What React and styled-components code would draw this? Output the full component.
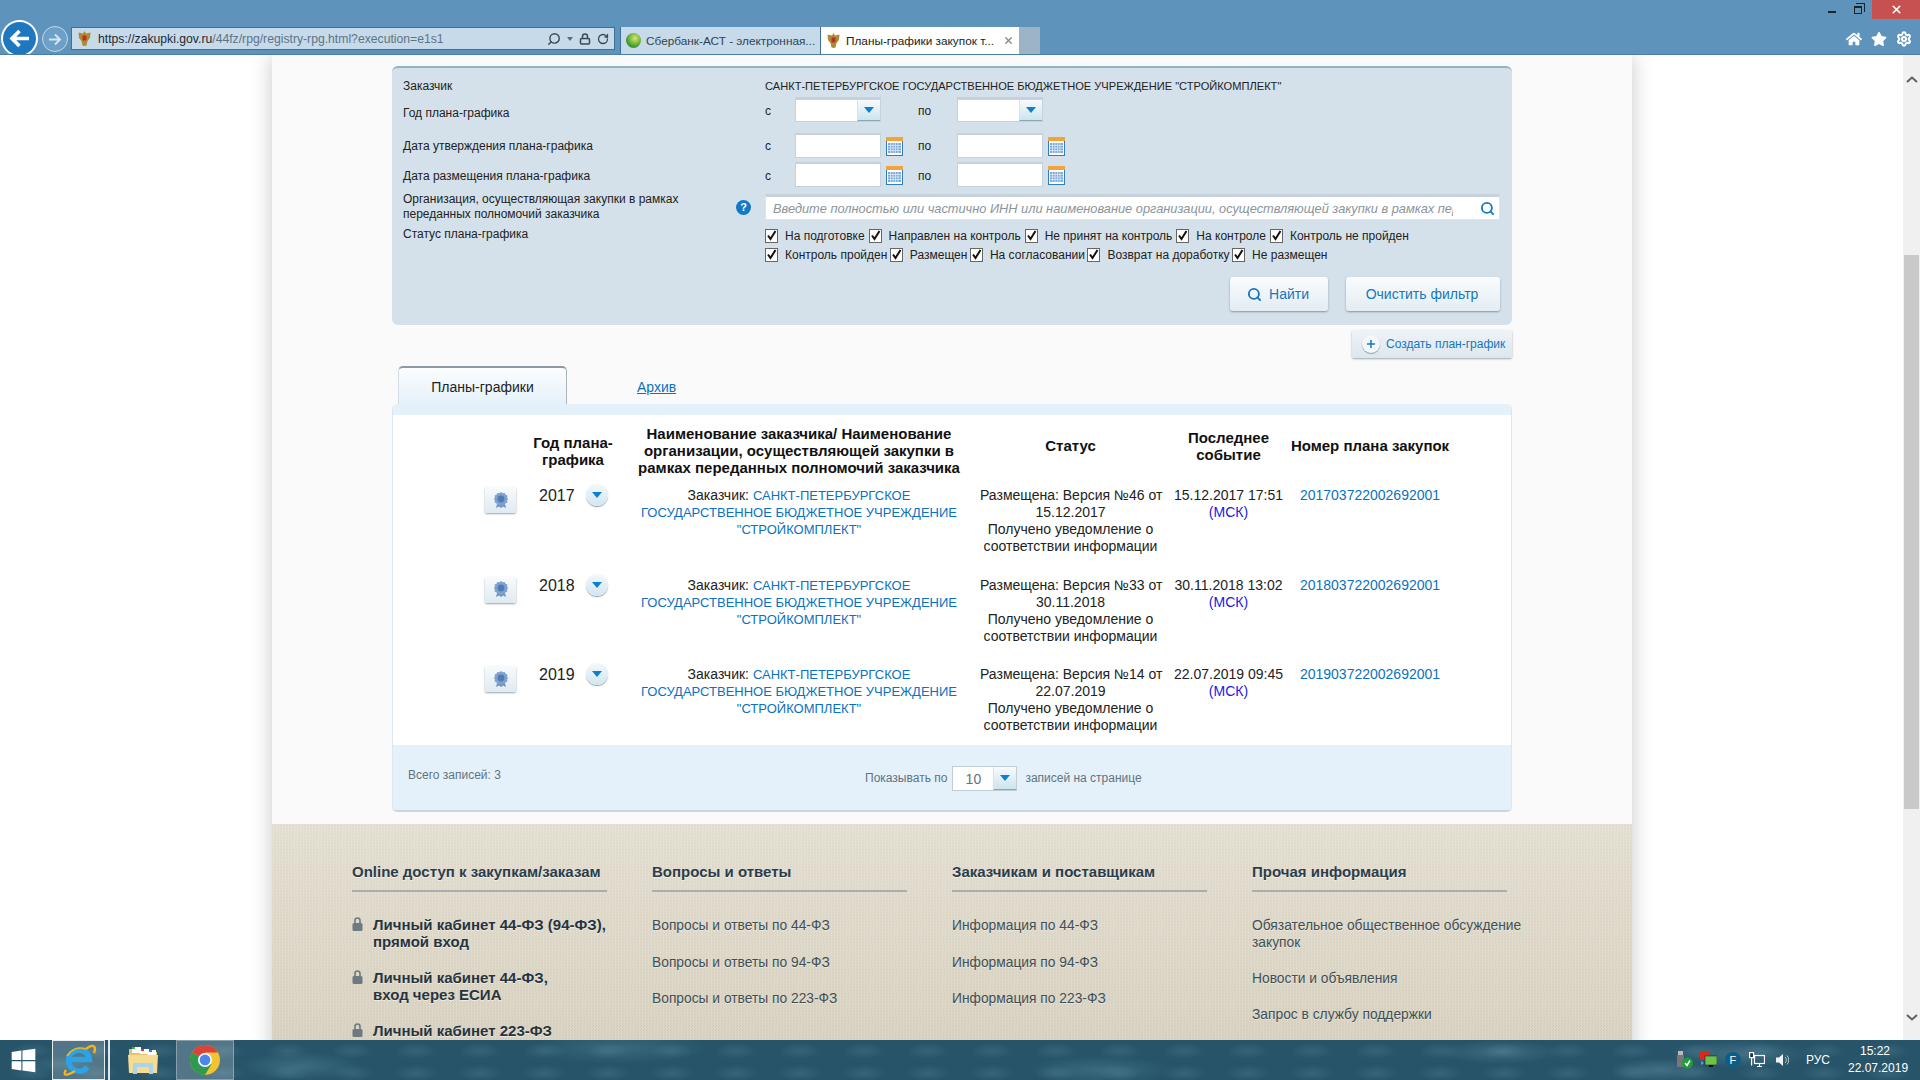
import React from 'react';
import styled, { createGlobalStyle } from 'styled-components';
import { FaHome, FaStar, FaWindows } from 'react-icons/fa';
import { Settings, Search, Plus, RotateCw, Lock as LockGlyph, X } from 'lucide-react';

const GlobalStyle = createGlobalStyle`
  html, body { margin: 0; padding: 0; background: #fff; }
  body { font-family: "Liberation Sans", Arial, sans-serif; color: #222; }
  * { box-sizing: border-box; }
`;

const statusTop = ['На подготовке', 'Направлен на контроль', 'Не принят на контроль', 'На контроле', 'Контроль не пройден'];
const statusBottom = ['Контроль пройден', 'Размещен', 'На согласовании', 'Возврат на доработку', 'Не размещен'];

const plans = [
  { year: 2017, version: '46', date: '15.12.2017', event: '15.12.2017 17:51', number: '201703722002692001' },
  { year: 2018, version: '33', date: '30.11.2018', event: '30.11.2018 13:02', number: '201803722002692001' },
  { year: 2019, version: '14', date: '22.07.2019', event: '22.07.2019 09:45', number: '201903722002692001' },
];

const Emblem = () => (
  <svg width="15" height="17" viewBox="0 0 15 17">
    <path d="M7.5 1 9 3.5 13.5 2.5 13 8 10.5 11 9.5 15.5 7.5 16 5.5 15.5 4.500 11 2 8 1.500 2.500 6 3.500Z" fill="#b08a2e" />
    <rect x="5.500" y="5.500" width="4" height="5" rx="1" fill="#b5322a" />
  </svg>
);

const CalendarIcon = () => (
  <svg width="17" height="19" viewBox="0 0 17 19">
    <rect x="0.500" y="0.500" width="16" height="18" fill="#fff" stroke="#2f7fb8" />
    <rect x="0" y="0" width="17" height="4" fill="#f3a33c" />
    <rect x="2" y="6" width="13" height="10" fill="#7fa9dc" />
    <path d="M4.500 6v10M7 6v10M9.500 6v10M12 6v10M2 8.500h13M2 11h13M2 13.500h13" stroke="#dce8f6" strokeWidth="0.8" />
  </svg>
);

const AwardIcon = () => (
  <svg width="14" height="17" viewBox="0 0 14 17">
    <path d="M3.500 10 2 16l3-1.500L7 16l2-1.500L12 16l-1.500-6Z" fill="#6f95c4" />
    <path d="M7 0l1.700 1.200 2-.3.8 1.900 1.900.8-.3 2L14 7l-.9 1.400.3 2-1.900.8-.8 1.900-2-.3L7 14l-1.700-1.200-2 .3-.8-1.900-1.900-.8.3-2L0 7l.9-1.400-.3-2 1.900-.8.8-1.900 2 .3Z" fill="#7ea1cd" />
    <circle cx="7" cy="7" r="3.400" fill="#4f7cb5" />
  </svg>
);

const PadlockIcon = () => (
  <svg width="11" height="14" viewBox="0 0 11 14">
    <path d="M3 6V3.500a2.500 2.500 0 0 1 5 0V6" fill="none" stroke="#6d7a82" strokeWidth="1.600" />
    <rect x="0.500" y="6" width="10" height="8" rx="1.500" fill="#6d7a82" />
  </svg>
);

const CheckMark = () => (
  <svg width="11" height="11" viewBox="0 0 11 11">
    <path d="M2 5.500 4.500 9 9.500 1" fill="none" stroke="#111" strokeWidth="2" />
  </svg>
);

const IeLogo = () => (
  <svg width="34" height="34" viewBox="0 0 34 34">
    <path d="M25.500 24A10.500 10.500 0 1 1 27.500 16.500H7" fill="none" stroke="#2ba3e4" strokeWidth="5.500" />
    <path d="M4 27C0 33 5 33 13 28M24 6c6-5 11-4 8 4" fill="none" stroke="#f2b51d" strokeWidth="2.400" />
    <path d="M5 13C9 7 16 3 24 6" fill="none" stroke="#f2b51d" strokeWidth="1.600" />
  </svg>
);

const FolderIcon = () => (
  <svg width="32" height="30" viewBox="0 0 32 30">
    <path d="M2 4h10l3 3h15v20H2Z" fill="#e6c467" />
    <rect x="5" y="2" width="9" height="6" fill="#fff" />
    <rect x="5" y="2" width="3" height="2" fill="#3bb54a" />
    <rect x="13" y="4" width="9" height="5" fill="#fff" />
    <rect x="14" y="4" width="3" height="2" fill="#d8402e" />
    <rect x="21" y="5" width="8" height="5" fill="#fff" />
    <rect x="22" y="5" width="3" height="2" fill="#2e86d8" />
    <path d="M1 10h30l-1 18H2Z" fill="#f5dc92" />
    <path d="M6 29V18h20v11h-4v-7H10v7Z" fill="#a8d4ec" />
  </svg>
);

const ChromeLogo = () => (
  <svg width="30" height="30" viewBox="0 0 30 30">
    <circle cx="15" cy="15" r="15" fill="#f4c430" />
    <path d="M15 15 2 7.500A15 15 0 0 1 28 7.500H15Z" fill="#d9443a" />
    <path d="M15 15 2 7.500A15 15 0 0 0 15 30l6.500-11Z" fill="#2d9a4f" />
    <circle cx="15" cy="15" r="7" fill="#fff" />
    <circle cx="15" cy="15" r="5.400" fill="#4b86ea" />
  </svg>
);

const UsbIcon = () => (
  <svg width="16" height="18" viewBox="0 0 16 18">
    <rect x="1" y="0" width="5" height="4" fill="#bbb" />
    <rect x="0" y="4" width="7" height="12" rx="1" fill="#777" />
    <circle cx="10.500" cy="12" r="5.500" fill="#1f9c3a" />
    <path d="M8 12l2 2.500 3-5" fill="none" stroke="#fff" strokeWidth="1.500" />
  </svg>
);

const NetworkIcon = () => (
  <svg width="17" height="16" viewBox="0 0 17 16">
    <rect x="0" y="0" width="10" height="8" fill="#d8291c" />
    <rect x="5" y="4" width="12" height="9" fill="#6cc24a" stroke="#113" strokeWidth="0.500" />
    <rect x="9" y="13" width="4" height="2" fill="#111" />
    <path d="M1 9v4l3-2Z" fill="#4ea1e8" />
  </svg>
);

const MonitorIcon = () => (
  <svg width="16" height="16" viewBox="0 0 16 16" fill="none" stroke="#fff" strokeWidth="1.200">
    <rect x="5.500" y="3.500" width="10" height="8" />
    <path d="M8 14.500h5M10.500 11.500v3" />
    <rect x="0.600" y="0.600" width="4" height="5" fill="#234" />
    <path d="M2.600 5.600v8" />
  </svg>
);

const SpeakerIcon = () => (
  <svg width="13" height="14" viewBox="0 0 13 14">
    <path d="M0 4.500h3L7 1v12L3 9.500H0Z" fill="#eef3f6" />
    <path d="M9 4a4 4 0 0 1 0 6M11 2.500a6.500 6.500 0 0 1 0 9" fill="none" stroke="#b8c8d2" strokeWidth="1" />
  </svg>
);

const ChromeBar = styled.header`
  height: 55px;
  background: #5e94bc;
  border-bottom: 1px solid #4b7ea6;
  overflow: hidden;
  flex: none;
`;

const WindowControls = styled.div`
  height: 19px;
  display: flex;
  justify-content: flex-end;
  gap: 2px;
  color: #1c1c1c;
`;

const WindowButton = styled.div`
  display: flex;
  align-items: center;
  justify-content: center;
  width: ${p => p.$width}px;
  height: 19px;
  background: ${p => p.$danger ? '#c75050' : 'transparent'};
  color: ${p => p.$danger ? '#fff' : '#1c1c1c'};
`;

const MinimizeMark = styled.span`
  display: block;
  width: 8px;
  height: 2px;
  margin-top: 5px;
  background: #222;
`;

const RestoreMark = styled.span`
  display: block;
  position: relative;
  width: 8px;
  height: 8px;
  margin-top: 1px;
  border: 1px solid #222;
  border-top-width: 2px;
  &::before {
    content: '';
    position: absolute;
    top: -5px;
    left: 1px;
    width: 8px;
    height: 8px;
    border-top: 1px solid #222;
    border-right: 1px solid #222;
  }
`;

const NavRow = styled.div`
  display: flex;
  align-items: flex-start;
  height: 35px;
`;

const BackButton = styled.div`
  display: flex;
  align-items: center;
  justify-content: center;
  width: 37px;
  height: 37px;
  margin: 1px 0 0 1px;
  border-radius: 50%;
  background: #fff;
  padding: 2px;
  flex: none;
  & > span {
    display: flex;
    align-items: center;
    justify-content: center;
    width: 33px;
    height: 33px;
    border-radius: 50%;
    background: #1d78bf;
  }
`;

const ForwardButton = styled.div`
  display: flex;
  align-items: center;
  justify-content: center;
  width: 26px;
  height: 26px;
  margin: 7px 0 0 4px;
  border-radius: 50%;
  border: 1px solid #c5d9e8;
  background: #6da0c6;
  flex: none;
`;

const AddressBar = styled.div`
  display: flex;
  align-items: center;
  width: 544px;
  height: 23px;
  margin: 8px 0 0 3px;
  padding: 0 5px;
  background: #c6dae9;
  border: 1px solid #3d7199;
  font-size: 12.2px;
  flex: none;
`;

const AddressUrl = styled.span`
  margin-left: 6px;
  color: #5d7486;
  white-space: nowrap;
  flex: 1;
  & b { font-weight: 400; color: #1b2a35; }
`;

const AddressTools = styled.span`
  display: flex;
  align-items: center;
  gap: 6px;
  color: #3a4a56;
`;

const TinyCaret = styled.span`
  width: 0;
  height: 0;
  border-left: 3px solid transparent;
  border-right: 3px solid transparent;
  border-top: 4px solid #5a6a76;
`;

const BrowserTabs = styled.div`
  display: flex;
  margin: 8px 0 0 5px;
  height: 27px;
`;

const BrowserTab = styled.div`
  display: flex;
  align-items: center;
  gap: 5px;
  width: ${p => p.$width}px;
  padding: 0 0 0 5px;
  background: ${p => p.$active ? '#fff' : '#c6dae9'};
  color: ${p => p.$active ? '#222' : '#33444f'};
  font-size: 11.8px;
  white-space: nowrap;
  border-left: 1px solid #3d7199;
  & > svg:last-child { margin-right: 5px; }
`;

const TabLabel = styled.span`
  flex: 1;
`;

const GreenDot = styled.span`
  width: 15px;
  height: 15px;
  border-radius: 50%;
  background: radial-gradient(circle at 60% 35%, #d9e86a, #3d9a2c 65%);
  flex: none;
`;

const NewTabSlot = styled.div`
  width: 21px;
  background: #9bb4c6;
`;

const BrowserTools = styled.div`
  display: flex;
  align-items: center;
  gap: 9px;
  height: 13px;
  margin: 13px 8px 0 auto;
  color: #fff;
`;

const Viewport = styled.div`
  display: flex;
  flex: 1;
  min-height: 0;
  overflow: hidden;
  background: #fff;
`;

const PageArea = styled.div`
  flex: 1;
  min-width: 0;
  overflow: hidden;
`;

const Sheet = styled.main`
  width: 1360px;
  margin-left: 272px;
  background: #fafafa;
  box-shadow: 0 0 20px rgba(0, 0, 0, 0.22);
`;

const Content = styled.div`
  padding: 11px 120px 12px;
`;

const FilterPanel = styled.section`
  height: 259px;
  padding: 8px 12px 0 11px;
  background: #d4e1eb;
  border-top: 2px solid #8fb3c9;
  border-radius: 6px;
  font-size: 12px;
`;

const FormRow = styled.div`
  display: flex;
  align-items: flex-start;
  height: ${p => p.$height}px;
  margin-bottom: ${p => p.$gap || 0}px;
`;

const FieldLabel = styled.div`
  width: 362px;
  flex: none;
  margin-top: ${p => p.$lift ? -p.$lift : 0}px;
  padding-top: ${p => p.$top || 0}px;
  line-height: 16px;
  white-space: nowrap;
`;

const OrgLabel = styled(FieldLabel)`
  display: flex;
  align-items: center;
  justify-content: space-between;
  padding-right: 14px;
  line-height: 15px;
  height: 26px;
`;

const HelpBadge = styled.span`
  display: flex;
  align-items: center;
  justify-content: center;
  width: 15px;
  height: 15px;
  border-radius: 50%;
  background: #1279c4;
  color: #fff;
  font-size: 11px;
  font-weight: 700;
`;

const ValueText = styled.div`
  font-size: 11.1px;
  line-height: 20px;
  white-space: nowrap;
`;

const RangeWord = styled.span`
  width: ${p => p.$width}px;
  flex: none;
  padding-top: ${p => p.$top || 0}px;
  line-height: 16px;
`;

const SelectBox = styled.div`
  display: flex;
  justify-content: flex-end;
  width: 86px;
  height: 25px;
  background: #fff;
  border: 1px solid #c6d2db;
  border-top-width: 3px;
  flex: none;
`;

const SelectArrow = styled.span`
  display: flex;
  align-items: center;
  justify-content: center;
  width: ${p => p.$width || 23}px;
  background: linear-gradient(#f7fbfd, #cde4ef);
  border-bottom: 1px solid #8fa6b4;
  border-left: 1px solid #d9e3ea;
  &::after {
    content: '';
    border-left: 5px solid transparent;
    border-right: 5px solid transparent;
    border-top: 6px solid #0c7fd0;
  }
`;

const SelectGap = styled.span`
  width: 37px;
  flex: none;
`;

const DateInput = styled.div`
  width: 86px;
  height: 25px;
  background: #fff;
  border: 1px solid #c6d2db;
  border-top-width: 2px;
  flex: none;
`;

const CalendarSlot = styled.span`
  display: flex;
  width: 37px;
  padding: 4px 0 0 5px;
  flex: none;
`;

const OrgInput = styled.div`
  display: flex;
  align-items: center;
  justify-content: space-between;
  width: 735px;
  height: 26px;
  padding: 0 4px 0 7px;
  background: #fff;
  border: 1px solid #dfe6eb;
  border-top: 3px solid #c6d2db;
  color: #1279c4;
`;

const PlaceholderInput = styled.input`
  width: 680px;
  padding: 0;
  border: none;
  outline: none;
  background: transparent;
  font: italic 12.8px "Liberation Sans", Arial, sans-serif;
  &::placeholder { color: #8a949b; opacity: 1; }
`;

const CheckRows = styled.div`
  display: flex;
  flex-direction: column;
  gap: 6px;
`;

const CheckRow = styled.div`
  display: flex;
  align-items: center;
  height: 13px;
  gap: ${p => p.$gap}px;
`;

const CheckItem = styled.label`
  display: flex;
  align-items: center;
  gap: 7px;
  white-space: nowrap;
`;

const CheckBox = styled.span`
  display: flex;
  align-items: center;
  justify-content: center;
  width: 13px;
  height: 14px;
  background: #fff;
  border: 1px solid #666;
`;

const FilterActions = styled.div`
  display: flex;
  justify-content: flex-end;
  gap: 18px;
  margin-top: 10px;
`;

const ActionButton = styled.button`
  display: flex;
  align-items: center;
  justify-content: center;
  gap: 7px;
  width: ${p => p.$width}px;
  height: 34px;
  padding: 0 2px 0 0;
  border: none;
  border-radius: 3px;
  background: linear-gradient(#fafcfd, #e3ecf3);
  box-shadow: 0 1px 2px rgba(60, 90, 110, 0.55);
  color: #1577bd;
  font: 14px "Liberation Sans", Arial, sans-serif;
`;

const CreateRow = styled.div`
  display: flex;
  justify-content: flex-end;
  margin-top: 5px;
`;

const CreateButton = styled.button`
  display: flex;
  align-items: center;
  gap: 6px;
  width: 160px;
  height: 28px;
  padding: 0 0 0 10px;
  border: none;
  border-radius: 2px;
  background: linear-gradient(#eef3f7, #dde7ee);
  box-shadow: 0 1px 2px rgba(60, 90, 110, 0.5);
  color: #1577bd;
  font: 12px "Liberation Sans", Arial, sans-serif;
  white-space: nowrap;
`;

const PlusCircle = styled.span`
  display: flex;
  align-items: center;
  justify-content: center;
  width: 18px;
  height: 18px;
  border-radius: 50%;
  background: #f5f8fa;
  box-shadow: 0 1px 1px rgba(60, 90, 110, 0.5);
`;

const TabRow = styled.nav`
  display: flex;
  align-items: center;
  height: 38px;
  margin-top: 8px;
  padding-left: 6px;
`;

const ActiveTab = styled.div`
  display: flex;
  align-items: center;
  justify-content: center;
  width: 169px;
  height: 38px;
  padding-top: 2px;
  border-top: 2px solid #8d9aa3;
  border-right: 1px solid #a9b6be;
  border-left: 1px solid #d3dde3;
  border-radius: 5px 5px 0 0;
  background: linear-gradient(#fcfdfe, #e4f1fa);
  font-size: 14px;
`;

const ArchiveLink = styled.a`
  margin: 4px 0 0 70px;
  color: #0a72bf;
  font-size: 14px;
  text-decoration: underline;
`;

const TablePanel = styled.section`
  height: 408px;
  display: flex;
  flex-direction: column;
  border-radius: 5px;
  border: 1px solid #dbe7ef;
  border-bottom: 2px solid #c7d6e0;
  border-top: none;
  background: #fff;
  overflow: hidden;
`;

const TableCap = styled.div`
  height: 11px;
  background: #e4f1fa;
  flex: none;
`;

const tableColumns = '135px 90px 362px 181px 135px 148px 68px';

const HeadRow = styled.div`
  display: grid;
  grid-template-columns: ${tableColumns};
  align-items: center;
  height: 72px;
  padding-bottom: 1px;
  text-align: center;
  font-size: 15px;
  font-weight: 700;
  line-height: 17px;
  color: #111;
  white-space: nowrap;
  flex: none;
`;

const HeadCell = styled.div`
  justify-self: center;
  margin-bottom: ${p => p.$lift || 0}px;
`;

const TableBody = styled.div`
  flex: 1;
`;

const PlanRow = styled.div`
  display: grid;
  grid-template-columns: ${tableColumns};
  padding-bottom: 21.5px;
  font-size: 14px;
  line-height: 17px;
  text-align: center;
  white-space: nowrap;
  &:last-child { padding-bottom: 11px; }
`;

const AwardCell = styled.div`
  display: flex;
  justify-content: flex-end;
  padding: 0 12px 0 0;
`;

const AwardButton = styled.span`
  display: flex;
  align-items: center;
  justify-content: center;
  width: 31px;
  height: 26px;
  border-radius: 2px;
  background: linear-gradient(#f8fbfc, #dfeaf1);
  box-shadow: 0 1px 2px rgba(60, 90, 110, 0.55);
`;

const YearCell = styled.div`
  display: flex;
  align-items: flex-start;
  gap: 11px;
  padding-left: 11px;
  font-size: 16px;
`;

const ExpandButton = styled.span`
  display: flex;
  align-items: center;
  justify-content: center;
  width: 22px;
  height: 22px;
  margin-top: -3px;
  border-radius: 50%;
  background: linear-gradient(#f3f8fb, #d3e6f0);
  box-shadow: 0 1px 1px rgba(60, 90, 110, 0.6);
  &::after {
    content: '';
    border-left: 5px solid transparent;
    border-right: 5px solid transparent;
    border-top: 6px solid #0c7fd0;
  }
`;

const PlanLink = styled.a`
  color: #0a72bf;
  text-decoration: none;
`;

const CustomerLink = styled(PlanLink)`
  font-size: 13px;
`;

const ZoneMark = styled.span`
  color: #1a1ae0;
`;

const TableFooter = styled.div`
  display: flex;
  align-items: center;
  height: 65px;
  padding-left: 15px;
  background: #e4f1fa;
  color: #5f7480;
  font-size: 12px;
  flex: none;
`;

const TotalText = styled.span`
  width: 457px;
  margin-bottom: 5px;
`;

const PageSizer = styled.div`
  display: flex;
  align-items: center;
  gap: 5px;
  margin-top: 1px;
`;

const PageSizeBox = styled.div`
  display: flex;
  width: 65px;
  height: 25px;
  background: #fff;
  border: 1px solid #c2ccd3;
  font-size: 14px;
  margin-right: 3px;
`;

const PageSizeValue = styled.span`
  flex: 1;
  text-align: center;
  line-height: 24px;
`;

const SiteFooter = styled.footer`
  display: grid;
  grid-template-columns: 255px 255px 255px 268px;
  column-gap: 45px;
  padding: 39px 0 60px 80px;
  background:
    repeating-conic-gradient(rgba(255, 255, 255, 0.09) 0 25%, rgba(90, 80, 50, 0.03) 0 50%) 0 0 / 3px 3px,
    linear-gradient(#e4dfd2, #d6cebb);
`;

const FooterTitle = styled.h3`
  width: 255px;
  margin: 0 0 25px;
  padding-bottom: 10px;
  border-bottom: 2px solid #acacac;
  color: #2b3d4b;
  font-size: 15px;
  font-weight: 700;
  line-height: 17px;
  white-space: nowrap;
  text-shadow: 0 1px 0 rgba(255, 255, 255, 0.5);
`;

const FooterList = styled.div`
  display: flex;
  flex-direction: column;
  gap: ${p => p.$gap || 19.5}px;
`;

const CabinetList = styled(FooterList)`
  margin-top: -1px;
`;

const FooterLink = styled.a`
  color: #3f4f55;
  font-size: 13.8px;
  line-height: 17px;
  white-space: nowrap;
  text-shadow: 0 1px 0 rgba(255, 255, 255, 0.4);
`;

const CabinetLink = styled.a`
  display: flex;
  gap: 10px;
  color: #27343e;
  font-size: 15px;
  font-weight: 700;
  line-height: 17px;
  white-space: nowrap;
  text-shadow: 0 1px 0 rgba(255, 255, 255, 0.5);
  & > svg { margin-top: 1px; flex: none; }
`;

const Scrollbar = styled.aside`
  display: flex;
  flex-direction: column;
  align-items: center;
  width: 17px;
  background: #f0f0f0;
  color: #606060;
  flex: none;
`;

const ScrollArrow = styled.svg`
  flex: none;
  margin: ${p => p.$margin};
`;

const ScrollThumb = styled.div`
  width: 15px;
  height: 554px;
  margin-top: 172px;
  background: #c9c9c9;
`;

const Taskbar = styled.footer`
  display: flex;
  align-items: stretch;
  height: 40px;
  flex: none;
  color: #fff;
  background:
    radial-gradient(ellipse 60px 14px at 300px 26px, rgba(110, 160, 180, 0.3), transparent),
    radial-gradient(ellipse 90px 16px at 620px 8px, rgba(110, 160, 180, 0.25), transparent),
    radial-gradient(ellipse 70px 14px at 1100px 30px, rgba(110, 160, 180, 0.28), transparent),
    radial-gradient(ellipse 70px 14px at 1740px 14px, rgba(120, 170, 190, 0.3), transparent),
    radial-gradient(ellipse 50px 12px at 1660px 30px, rgba(130, 175, 195, 0.3), transparent),
    radial-gradient(ellipse 60px 12px at 1500px 12px, rgba(130, 175, 195, 0.25), transparent),
    radial-gradient(ellipse 40px 9px at 60px 60%, rgba(120, 170, 190, 0.2), transparent 100%),
    radial-gradient(ellipse 22px 8px, rgba(120, 165, 185, 0.2), transparent) 0 0 / 64px 22px,
    #275469;
`;

const StartButton = styled.div`
  display: flex;
  align-items: center;
  justify-content: center;
  width: 52px;
  padding-right: 5px;
  flex: none;
`;

const TaskButton = styled.div`
  display: flex;
  align-items: center;
  justify-content: center;
  width: ${p => p.$width}px;
  flex: none;
  background: ${p => p.$pinned ? 'rgba(255, 255, 255, 0.2)' : 'transparent'};
  border: ${p => p.$pinned ? `1px solid rgba(255, 255, 255, ${p.$active ? 0.85 : 0.3})` : 'none'};
`;

const TaskSliver = styled.span`
  width: 5px;
  margin-left: 0;
  border-right: 2px solid #dce8ee;
  flex: none;
`;

const Tray = styled.div`
  display: flex;
  align-items: center;
  margin-left: auto;
  padding-right: 18px;
`;

const TrayIcon = styled.span`
  display: flex;
  margin-right: ${p => p.$gap}px;
`;

const FBadge = styled.span`
  display: flex;
  align-items: center;
  justify-content: center;
  width: 16px;
  height: 16px;
  margin-right: 8px;
  border-radius: 50%;
  background: #0f5c86;
  font-size: 11px;
`;

const TrayLang = styled.span`
  margin-right: 18px;
  font-size: 12px;
`;

const Clock = styled.div`
  width: 54px;
  text-align: center;
  font-size: 12px;
  line-height: 17px;
`;

const Shell = styled.div`
  display: flex;
  flex-direction: column;
  height: 100vh;
  overflow: hidden;
`;

const StatusChecks = ({ items, gap }) => (
  <CheckRow $gap={gap}>
    {items.map(label => (
      <CheckItem key={label}>
        <CheckBox><CheckMark /></CheckBox>
        {label}
      </CheckItem>
    ))}
  </CheckRow>
);

const DateRange = ({ label, top, height, gap }) => (
  <FormRow $height={height} $gap={gap}>
    <FieldLabel $top={top}>{label}</FieldLabel>
    <RangeWord $width={30} $top={top}>с</RangeWord>
    <DateInput />
    <CalendarSlot><CalendarIcon /></CalendarSlot>
    <RangeWord $width={39} $top={top}>по</RangeWord>
    <DateInput />
    <CalendarSlot><CalendarIcon /></CalendarSlot>
  </FormRow>
);

export default function App() {
  return (
    <Shell>
      <GlobalStyle />
      <ChromeBar>
        <WindowControls>
          <WindowButton $width={24}><MinimizeMark /></WindowButton>
          <WindowButton $width={24}><RestoreMark /></WindowButton>
          <WindowButton $width={48} $danger><X size={13} strokeWidth={3} /></WindowButton>
        </WindowControls>
        <NavRow>
          <BackButton>
            <span>
              <svg width="21" height="19" viewBox="0 0 21 19" fill="none" stroke="#fff" strokeWidth="3.600">
                <path d="M10.500 2 3 9.500l7.500 7.500M3 9.500h17" />
              </svg>
            </span>
          </BackButton>
          <ForwardButton>
            <svg width="14" height="13" viewBox="0 0 14 13" fill="none" stroke="#d5e4ef" strokeWidth="2">
              <path d="M7 1.500 12 6.500 7 11.500M12 6.500H1" />
            </svg>
          </ForwardButton>
          <AddressBar>
            <Emblem />
            <AddressUrl><b>https://zakupki.gov.ru</b>/44fz/rpg/registry-rpg.html?execution=e1s1</AddressUrl>
            <AddressTools>
              <Search size={14} strokeWidth={2.4} style={{ transform: 'scaleX(-1)' }} />
              <TinyCaret />
              <LockGlyph size={12} strokeWidth={3} />
              <RotateCw size={12} strokeWidth={2.6} />
            </AddressTools>
          </AddressBar>
          <BrowserTabs>
            <BrowserTab $width={200}>
              <GreenDot />
              <TabLabel>Сбербанк-АСТ - электронная...</TabLabel>
            </BrowserTab>
            <BrowserTab $width={199} $active>
              <Emblem />
              <TabLabel>Планы-графики закупок т...</TabLabel>
              <X size={11} color="#888" strokeWidth={3} />
            </BrowserTab>
            <NewTabSlot />
          </BrowserTabs>
          <BrowserTools>
            <FaHome size={16} />
            <FaStar size={16} />
            <Settings size={16} strokeWidth={3} />
          </BrowserTools>
        </NavRow>
      </ChromeBar>

      <Viewport>
        <PageArea>
          <Sheet>
            <Content>
              <FilterPanel>
                <FormRow $height={20} $gap={1}>
                  <FieldLabel $top={2}>Заказчик</FieldLabel>
                  <ValueText>САНКТ-ПЕТЕРБУРГСКОЕ ГОСУДАРСТВЕННОЕ БЮДЖЕТНОЕ УЧРЕЖДЕНИЕ "СТРОЙКОМПЛЕКТ"</ValueText>
                </FormRow>
                <FormRow $height={25} $gap={11}>
                  <FieldLabel $top={8}>Год плана-графика</FieldLabel>
                  <RangeWord $width={30} $top={6}>с</RangeWord>
                  <SelectBox><SelectArrow /></SelectBox>
                  <SelectGap />
                  <RangeWord $width={39} $top={6}>по</RangeWord>
                  <SelectBox><SelectArrow /></SelectBox>
                </FormRow>
                <DateRange label="Дата утверждения плана-графика" top={5} height={25} gap={4} />
                <DateRange label="Дата размещения плана-графика" top={6} height={25} gap={7} />
                <FormRow $height={26} $gap={9}>
                  <OrgLabel>
                    <span>Организация, осуществляющая закупки в рамках<br />переданных полномочий заказчика</span>
                    <HelpBadge>?</HelpBadge>
                  </OrgLabel>
                  <OrgInput>
                    <PlaceholderInput readOnly placeholder="Введите полностью или частично ИНН или наименование организации, осуществляющей закупки в рамках переданных полномочий заказчика" />
                    <Search size={15} strokeWidth={3} />
                  </OrgInput>
                </FormRow>
                <FormRow $height={38}>
                  <FieldLabel $lift={3}>Статус плана-графика</FieldLabel>
                  <CheckRows>
                    <StatusChecks items={statusTop} gap={4} />
                    <StatusChecks items={statusBottom} gap={2.5} />
                  </CheckRows>
                </FormRow>
                <FilterActions>
                  <ActionButton $width={98}><Search size={15} strokeWidth={3} />Найти</ActionButton>
                  <ActionButton $width={154}>Очистить фильтр</ActionButton>
                </FilterActions>
              </FilterPanel>

              <CreateRow>
                <CreateButton>
                  <PlusCircle><Plus size={12} strokeWidth={3} /></PlusCircle>
                  Создать план-график
                </CreateButton>
              </CreateRow>

              <TabRow>
                <ActiveTab>Планы-графики</ActiveTab>
                <ArchiveLink href="#">Архив</ArchiveLink>
              </TabRow>

              <TablePanel>
                <TableCap />
                <HeadRow>
                  <span />
                  <HeadCell>Год плана-<br />графика</HeadCell>
                  <HeadCell>Наименование заказчика/ Наименование<br />организации, осуществляющей закупки в<br />рамках переданных полномочий заказчика</HeadCell>
                  <HeadCell $lift={10}>Статус</HeadCell>
                  <HeadCell $lift={10}>Последнее<br />событие</HeadCell>
                  <HeadCell $lift={10}>Номер плана закупок</HeadCell>
                </HeadRow>
                <TableBody>
                  {plans.map(plan => (
                    <PlanRow key={plan.year}>
                      <AwardCell><AwardButton><AwardIcon /></AwardButton></AwardCell>
                      <YearCell>
                        {plan.year}
                        <ExpandButton />
                      </YearCell>
                      <div>
                        Заказчик: <CustomerLink href="#">САНКТ-ПЕТЕРБУРГСКОЕ<br />ГОСУДАРСТВЕННОЕ БЮДЖЕТНОЕ УЧРЕЖДЕНИЕ<br />"СТРОЙКОМПЛЕКТ"</CustomerLink>
                      </div>
                      <div>
                        Размещена: Версия №{plan.version} от<br />{plan.date}<br />Получено уведомление о<br />соответствии информации
                      </div>
                      <div>
                        {plan.event}<br /><ZoneMark>(МСК)</ZoneMark>
                      </div>
                      <div><PlanLink href="#">{plan.number}</PlanLink></div>
                    </PlanRow>
                  ))}
                </TableBody>
                <TableFooter>
                  <TotalText>Всего записей: 3</TotalText>
                  <PageSizer>
                    Показывать по
                    <PageSizeBox>
                      <PageSizeValue>10</PageSizeValue>
                      <SelectArrow $width={23} />
                    </PageSizeBox>
                    записей на странице
                  </PageSizer>
                </TableFooter>
              </TablePanel>
            </Content>

            <SiteFooter>
              <div>
                <FooterTitle>Online доступ к закупкам/заказам</FooterTitle>
                <CabinetList $gap={19}>
                  <CabinetLink><PadlockIcon /><span>Личный кабинет 44-ФЗ (94-ФЗ),<br />прямой вход</span></CabinetLink>
                  <CabinetLink><PadlockIcon /><span>Личный кабинет 44-ФЗ,<br />вход через ЕСИА</span></CabinetLink>
                  <CabinetLink><PadlockIcon /><span>Личный кабинет 223-ФЗ</span></CabinetLink>
                </CabinetList>
              </div>
              <div>
                <FooterTitle>Вопросы и ответы</FooterTitle>
                <FooterList>
                  <FooterLink>Вопросы и ответы по 44-ФЗ</FooterLink>
                  <FooterLink>Вопросы и ответы по 94-ФЗ</FooterLink>
                  <FooterLink>Вопросы и ответы по 223-ФЗ</FooterLink>
                </FooterList>
              </div>
              <div>
                <FooterTitle>Заказчикам и поставщикам</FooterTitle>
                <FooterList>
                  <FooterLink>Информация по 44-ФЗ</FooterLink>
                  <FooterLink>Информация по 94-ФЗ</FooterLink>
                  <FooterLink>Информация по 223-ФЗ</FooterLink>
                </FooterList>
              </div>
              <div>
                <FooterTitle>Прочая информация</FooterTitle>
                <FooterList $gap={19}>
                  <FooterLink>Обязательное общественное обсуждение<br />закупок</FooterLink>
                  <FooterLink>Новости и объявления</FooterLink>
                  <FooterLink>Запрос в службу поддержки</FooterLink>
                </FooterList>
              </div>
            </SiteFooter>
          </Sheet>
        </PageArea>
        <Scrollbar>
          <ScrollArrow $margin="21px 0 0" width="12" height="7" viewBox="0 0 12 7" fill="none" stroke="currentColor" strokeWidth="2">
            <path d="M1 6 6 1.500 11 6" />
          </ScrollArrow>
          <ScrollThumb />
          <ScrollArrow $margin="205px 0 0" width="12" height="7" viewBox="0 0 12 7" fill="none" stroke="currentColor" strokeWidth="2">
            <path d="M1 1 6 5.500 11 1" />
          </ScrollArrow>
        </Scrollbar>
      </Viewport>

      <Taskbar>
        <StartButton><FaWindows size={27} /></StartButton>
        <TaskButton $width={53} $pinned $active><IeLogo /></TaskButton>
        <TaskSliver />
        <TaskButton $width={66}><FolderIcon /></TaskButton>
        <TaskButton $width={58} $pinned><ChromeLogo /></TaskButton>
        <Tray>
          <TrayIcon $gap={7}><UsbIcon /></TrayIcon>
          <TrayIcon $gap={8}><NetworkIcon /></TrayIcon>
          <FBadge>F</FBadge>
          <TrayIcon $gap={11}><MonitorIcon /></TrayIcon>
          <TrayIcon $gap={17}><SpeakerIcon /></TrayIcon>
          <TrayLang>РУС</TrayLang>
          <Clock>15:22<br />22.07.2019</Clock>
        </Tray>
      </Taskbar>
    </Shell>
  );
}
